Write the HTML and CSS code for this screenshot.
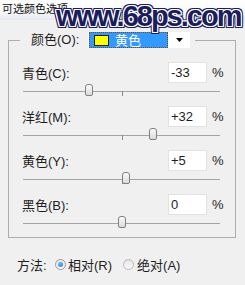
FILE: index.html
```html
<!DOCTYPE html>
<html lang="zh">
<head>
<meta charset="utf-8">
<title>可选颜色选项</title>
<link rel="stylesheet" href="styles.css">
</head>
<body>
<div class="dialog">
  <div class="titlebar">可选颜色选项</div>
  <div class="watermark">www.68ps.com</div>
  <fieldset class="group">
    <legend class="legend">
      <span class="legend-label">颜色(O):</span>
      <span class="select">
        <span class="select-value"><span class="swatch"></span>黄色</span>
        <span class="select-arrow"><svg width="7" height="4" viewBox="0 0 7 4"><path d="M0 0H7L3.5 4Z" fill="#000"/></svg></span>
      </span>
    </legend>
    <div class="rows">
      <div class="row">
        <div class="row-head"><span class="label">青色(C):</span><span class="field">-33</span><span class="pct">%</span></div>
        <div class="slider"><span class="tick"></span><span class="thumb" style="left:33.5%"></span></div>
      </div>
      <div class="row">
        <div class="row-head"><span class="label">洋红(M):</span><span class="field">+32</span><span class="pct">%</span></div>
        <div class="slider"><span class="tick"></span><span class="thumb" style="left:66%"></span></div>
      </div>
      <div class="row">
        <div class="row-head"><span class="label">黄色(Y):</span><span class="field">+5</span><span class="pct">%</span></div>
        <div class="slider"><span class="tick"></span><span class="thumb" style="left:52.5%"></span></div>
      </div>
      <div class="row">
        <div class="row-head"><span class="label">黑色(B):</span><span class="field">0</span><span class="pct">%</span></div>
        <div class="slider"><span class="tick"></span><span class="thumb" style="left:50%"></span></div>
      </div>
    </div>
  </fieldset>
  <div class="method">
    <span class="method-label">方法:</span>
    <span class="radio radio-on"></span><span class="radio-text">相对(R)</span>
    <span class="radio radio-off"></span><span class="radio-text">绝对(A)</span>
  </div>
</div>
</body>
</html>
```

FILE: styles.css
```css
html, body {
  margin: 0;
  padding: 0;
}
body {
  width: 245px;
  height: 285px;
  overflow: hidden;
  background: #f0f0f0;
  font-family: "Liberation Sans", "Noto Sans CJK SC", sans-serif;
  font-size: 13px;
  color: #1e1e1e;
}
.dialog {
  position: relative;
  width: 245px;
  height: 285px;
  display: flex;
  flex-direction: column;
}
.titlebar {
  height: 20px;
  line-height: 16px;
  padding-left: 2px;
  font-size: 11px;
  font-family: "Noto Sans CJK SC", sans-serif;
  color: #111;
  background: linear-gradient(#ffffff, #f6f7f9 60%, #e6eaef);
  box-sizing: border-box;
}
.watermark {
  position: absolute;
  left: 56px;
  top: 2px;
  font-family: "Liberation Sans", sans-serif;
  font-weight: bold;
  font-size: 29px;
  line-height: 28px;
  letter-spacing: -2px;
  color: #1b1d5c;
  text-shadow:
    1px 0 0 #fff, -1px 0 0 #fff, 0 1px 0 #fff, 0 -1px 0 #fff,
    1px 1px 0 #fff, -1px -1px 0 #fff, 1px -1px 0 #fff, -1px 1px 0 #fff,
    2px 0 0 #1b1d5c, -2px 0 0 #1b1d5c, 0 2px 0 #1b1d5c, 0 -2px 0 #1b1d5c,
    2px 2px 0 #1b1d5c, -2px -2px 0 #1b1d5c, 2px -2px 0 #1b1d5c, -2px 2px 0 #1b1d5c;
}
.group {
  margin: 12px 0 0 8px;
  width: 228px;
  box-sizing: border-box;
  border: 1px solid #adadad;
  padding: 14px 12px 2px 13px;
  min-width: 0;
}
.legend {
  margin-left: -2px;
  padding: 0 5px 0 11px;
  display: flex;
  align-items: center;
  height: 16px;
}
.legend-label {
  font-family: "Liberation Sans", "Noto Sans CJK SC", sans-serif;
  width: 57px;
  line-height: 16px;
}
.select {
  width: 102px;
  height: 16px;
  background: #fff;
  display: flex;
  align-items: stretch;
  padding-left: 1px;
  box-sizing: border-box;
}
.select-value {
  width: 79px;
  box-sizing: border-box;
  background: #3399ff;
  border: 1px dotted #7a4a10;
  color: #fff;
  display: flex;
  align-items: center;
  padding-left: 4px;
  line-height: 14px;
  font-family: "Noto Sans CJK SC", sans-serif;
}
.swatch {
  width: 15px;
  height: 11px;
  box-sizing: border-box;
  background: #ffff00;
  border: 1px solid #222;
  margin-right: 6px;
}
.select-arrow {
  flex: 1;
  display: flex;
  align-items: center;
  justify-content: center;
}
.rows {
  display: flex;
  flex-direction: column;
  gap: 3px;
}
.row-head {
  display: flex;
  align-items: center;
  height: 21px;
}
.label {
  flex: 1;
}
.field {
  width: 39px;
  height: 21px;
  box-sizing: border-box;
  background: #fff;
  border: 1px solid #e2e2e2;
  padding-left: 2px;
  line-height: 19px;
}
.pct {
  width: 11px;
  margin-left: 5px;
  line-height: 21px;
}
.slider {
  position: relative;
  height: 20px;
  margin: 0 3px 0 1px;
}
.slider::before {
  content: "";
  position: absolute;
  left: 0;
  right: 0;
  top: 8px;
  height: 1px;
  background: #a4a4a4;
}
.tick {
  position: absolute;
  left: 50%;
  top: 8px;
  width: 1px;
  height: 5px;
  background: #8a8a8a;
}
.thumb {
  position: absolute;
  top: 1px;
  width: 8px;
  height: 12px;
  margin-left: -4px;
  box-sizing: border-box;
  border: 1px solid #808080;
  border-radius: 3px 3px 2px 2px;
  background: linear-gradient(#fbfbfb, #dadada);
}
.method {
  display: flex;
  align-items: center;
  margin-top: 18px;
  padding-left: 17px;
  height: 16px;
}
.method-label {
  width: 38px;
}
.radio {
  width: 11px;
  height: 11px;
  box-sizing: border-box;
  border-radius: 50%;
  border: 1px solid #9a9a9a;
  background: linear-gradient(#e6e6e6, #fafafa);
  display: flex;
  align-items: center;
  justify-content: center;
}
.radio-on::after {
  content: "";
  width: 5px;
  height: 5px;
  border-radius: 50%;
  background: radial-gradient(circle at 40% 35%, #6ec0ff, #1b6fc8);
}
.radio-off {
  border-color: #b8b8b8;
}
.radio-text {
  margin-left: 2px;
  margin-right: 11px;
}
.radio-off + .radio-text {
  margin-left: 3px;
}
```
